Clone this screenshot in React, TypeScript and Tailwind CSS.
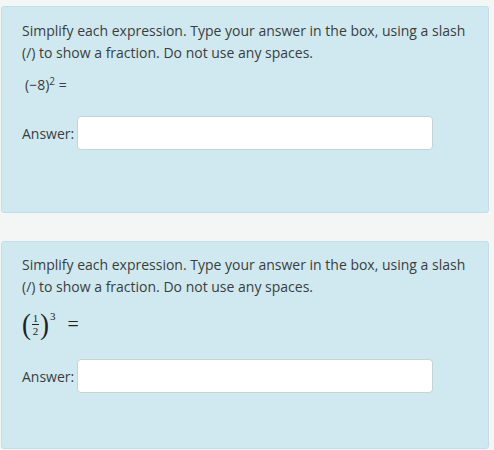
import React from "react";

const FONT = { fontFamily: '"Open Sans", "Noto Sans", sans-serif' };

function Prompt() {
  return (
    <p className="text-[14px] leading-[22px] text-[#3a3d40]">
      Simplify each expression. Type your answer in the box, using a slash (/) to show a fraction. Do not use any spaces.
    </p>
  );
}

function AnswerRow({ className = "" }: { className?: string }) {
  return (
    <div className={`flex items-center gap-[3px] ${className}`}>
      <label className="text-[14px] text-[#3a3d40]">Answer:</label>
      <input
        type="text"
        className="w-[356px] h-[34px] bg-white border border-[#c5d3d8] rounded-[4px] px-2 outline-none"
      />
    </div>
  );
}

export default function App() {
  return (
    <div className="min-h-[450px] w-[494px] bg-[#f4f5f5] pt-[6px] pl-px overflow-hidden" style={FONT}>
      {/* question 1 */}
      <div className="w-[488px] h-[207px] bg-[#d0e9f0] border border-[#c2dfe7] rounded-[3px] pl-[20px] pr-[20px] pt-[13px]">
        <Prompt />
        <div className="mt-[11px] pl-[3px] text-[14px] leading-[20px] text-[#3a3d40]">
          (−8)<sup className="text-[10px] top-[-5px]">2</sup> =
        </div>
        <AnswerRow className="mt-[21px]" />
      </div>

      {/* question 2 */}
      <div className="mt-[28px] w-[488px] h-[208px] bg-[#d0e9f0] border border-[#c2dfe7] rounded-[3px] pl-[20px] pr-[20px] pt-[12px]">
        <Prompt />
        <div
          className="mt-[9px] flex items-center h-[34px] text-[#222]"
          style={{ fontFamily: '"Liberation Serif", "DejaVu Serif", serif' }}
        >
          <span className="text-[27px] leading-none scale-y-110">(</span>
          <span className="flex flex-col items-center text-[11px] leading-[10px] mx-[1px]">
            <span>1</span>
            <span className="w-[7px] h-px bg-[#222] my-[1px]"></span>
            <span>2</span>
          </span>
          <span className="text-[27px] leading-none scale-y-110">)</span>
          <span className="self-start text-[11px] mt-[1px] ml-[1px]">3</span>
          <span className="ml-[12px] text-[20px]">=</span>
        </div>
        <AnswerRow className="mt-[18px]" />
      </div>
    </div>
  );
}
